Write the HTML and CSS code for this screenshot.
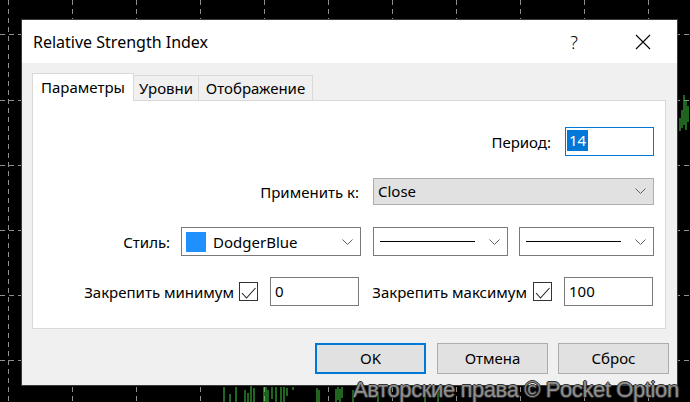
FILE: index.html
```html
<!DOCTYPE html>
<html lang="ru">
<head>
  <meta charset="UTF-8">
  <title>Relative Strength Index</title>
  <link rel="stylesheet" href="styles.css">
</head>
<body>
  <!-- chart behind the dialog -->
  <svg class="chart" width="690" height="402" viewBox="0 0 690 402">
    <g class="grid">
      <line x1="8.5" y1="0" x2="8.5" y2="402"/>
      <line x1="72.5" y1="0" x2="72.5" y2="402"/>
      <line x1="136.5" y1="0" x2="136.5" y2="402"/>
      <line x1="200.5" y1="0" x2="200.5" y2="402"/>
      <line x1="264.5" y1="0" x2="264.5" y2="402"/>
      <line x1="328.5" y1="0" x2="328.5" y2="402"/>
      <line x1="392.5" y1="0" x2="392.5" y2="402"/>
      <line x1="456.5" y1="0" x2="456.5" y2="402"/>
      <line x1="520.5" y1="0" x2="520.5" y2="402"/>
      <line x1="584.5" y1="0" x2="584.5" y2="402"/>
      <line x1="648.5" y1="0" x2="648.5" y2="402"/>
      <line x1="0" y1="34.5" x2="690" y2="34.5"/>
      <line x1="0" y1="100.5" x2="690" y2="100.5"/>
      <line x1="0" y1="165.5" x2="690" y2="165.5"/>
      <line x1="0" y1="230.5" x2="690" y2="230.5"/>
      <line x1="0" y1="295.5" x2="690" y2="295.5"/>
      <line x1="0" y1="360.5" x2="690" y2="360.5"/>
    </g>
    <g class="bars">
      <line x1="224" y1="387" x2="224" y2="402"/>
      <line x1="230" y1="394" x2="230" y2="402"/>
      <line x1="236" y1="387" x2="236" y2="402"/>
      <line x1="245" y1="390" x2="245" y2="402"/>
      <line x1="248" y1="393" x2="248" y2="402"/>
      <line x1="251" y1="386" x2="251" y2="402"/>
      <line x1="254" y1="388" x2="254" y2="402"/>
      <line x1="264" y1="387" x2="264" y2="402"/>
      <line x1="266" y1="387" x2="266" y2="402"/>
      <line x1="268" y1="390" x2="268" y2="402"/>
      <line x1="272" y1="387" x2="272" y2="399"/>
      <line x1="276" y1="387" x2="276" y2="402"/>
      <line x1="281" y1="387" x2="281" y2="402"/>
      <line x1="284" y1="387" x2="284" y2="402"/>
      <line x1="287" y1="388" x2="287" y2="396"/>
      <line x1="293" y1="387" x2="293" y2="390"/>
      <line x1="317" y1="388" x2="317" y2="402"/>
      <line x1="319" y1="390" x2="319" y2="402"/>
      <line x1="336" y1="389" x2="336" y2="402"/>
      <line x1="338" y1="387" x2="338" y2="400"/>
      <line x1="340" y1="389" x2="340" y2="402"/>
      <line x1="342" y1="387" x2="342" y2="398"/>
      <line x1="353" y1="390" x2="353" y2="402"/>
      <line x1="378" y1="392" x2="378" y2="402"/>
      <line x1="425" y1="391" x2="425" y2="402"/>
      <line x1="438" y1="389" x2="438" y2="402"/>
      <line x1="680" y1="118" x2="680" y2="131"/>
      <line x1="682" y1="110" x2="682" y2="128"/>
      <line x1="684" y1="95" x2="684" y2="125"/>
      <line x1="686" y1="100" x2="686" y2="130"/>
      <line x1="688" y1="106" x2="688" y2="122"/>
    </g>
  </svg>

  <div class="dialog">
    <div class="titlebar">
      <span class="title">Relative Strength Index</span>
      <span class="help">?</span>
      <svg class="close" width="16" height="16" viewBox="0 0 16 16"><path d="M1 1 L15 15 M15 1 L1 15"/></svg>
    </div>
    <div class="dialog-body">
      <div class="tabs">
        <div class="tab active">Параметры</div>
        <div class="tab tab-levels">Уровни</div>
        <div class="tab tab-view">Отображение</div>
      </div>
      <div class="panel">
        <div class="row">
          <span class="label">Период:</span>
          <div class="field focus"><span class="selected">14</span></div>
        </div>
        <div class="row">
          <span class="label">Применить к:</span>
          <div class="combo flat wide">
            <span class="combo-text">Close</span>
            <svg class="chev" width="11" height="6" viewBox="0 0 11 6"><polyline points="0.5,0.5 5.5,5.5 10.5,0.5"/></svg>
          </div>
        </div>
        <div class="row">
          <span class="label label-style">Стиль:</span>
          <div class="combo color">
            <span class="swatch"></span>
            <span class="combo-text">DodgerBlue</span>
            <svg class="chev" width="11" height="6" viewBox="0 0 11 6"><polyline points="0.5,0.5 5.5,5.5 10.5,0.5"/></svg>
          </div>
          <div class="combo line">
            <span class="line-sample"></span>
            <svg class="chev" width="11" height="6" viewBox="0 0 11 6"><polyline points="0.5,0.5 5.5,5.5 10.5,0.5"/></svg>
          </div>
          <div class="combo line">
            <span class="line-sample"></span>
            <svg class="chev" width="11" height="6" viewBox="0 0 11 6"><polyline points="0.5,0.5 5.5,5.5 10.5,0.5"/></svg>
          </div>
        </div>
        <div class="row row-fix">
          <span class="label">Закрепить минимум</span>
          <span class="check"><svg width="17" height="17" viewBox="0 0 17 17"><polyline points="2,10 6.5,15 15.5,5"/></svg></span>
          <div class="field"><span>0</span></div>
          <span class="label label-max">Закрепить максимум</span>
          <span class="check"><svg width="17" height="17" viewBox="0 0 17 17"><polyline points="2,10 6.5,15 15.5,5"/></svg></span>
          <div class="field"><span>100</span></div>
        </div>
      </div>
      <div class="buttons">
        <button class="btn default">OK</button>
        <button class="btn">Отмена</button>
        <button class="btn">Сброс</button>
      </div>
    </div>
  </div>

  <div class="watermark">Авторские права © Pocket Option</div>
</body>
</html>
```

FILE: styles.css
```css
body {
  margin: 0;
  width: 690px;
  height: 402px;
  overflow: hidden;
  position: relative;
  background: #000;
  font-family: 'Noto Sans', 'Open Sans', sans-serif;
  color: #000;
}
.chart {
  position: absolute;
  left: 0; top: 0;
}
.grid line {
  stroke: #8f8f8f;
  stroke-width: 1;
  stroke-dasharray: 5 4;
}
.bars line {
  stroke: #3ec83e;
  stroke-width: 1;
}
.dialog {
  position: relative;
  margin: 19px 0 0 21px;
  width: 657px;
  height: 367px;
  box-sizing: border-box;
  border: 1px solid #3a3a3a;
  background: #f0f0f0;
  display: flex;
  flex-direction: column;
}
.titlebar {
  height: 43px;
  background: #fff;
  display: flex;
  align-items: center;
  padding-left: 11px;
}
.title {
  font-size: 16px;
}
.help {
  margin-left: auto;
  font-size: 18px;
  font-weight: 300;
  margin-right: 57px;
}
.close {
  margin-right: 26px;
}
.close path {
  stroke: #000;
  stroke-width: 1.1;
  fill: none;
}
.dialog-body {
  padding: 10px 0 0 10px;
}
.tabs {
  display: flex;
  align-items: flex-end;
  height: 27px;
  font-size: 15px;
}
.tab {
  height: 25px;
  box-sizing: border-box;
  border: 1px solid #d9d9d9;
  border-left: none;
  border-bottom: none;
  background: #f0f0f0;
  display: flex;
  align-items: center;
  justify-content: center;
}
.tab.active {
  width: 102px;
  height: 28px;
  margin-bottom: -1px;
  border-left: 1px solid #d9d9d9;
  background: #fff;
  padding-bottom: 2px;
  position: relative;
  z-index: 1;
}
.tab-levels {
  width: 65px;
}
.tab-view {
  width: 114px;
}
.panel {
  width: 634px;
  height: 229px;
  box-sizing: border-box;
  border: 1px solid #d9d9d9;
  background: #fff;
  padding: 26px 11px 0 0;
  display: flex;
  flex-direction: column;
  gap: 21px;
  font-size: 15px;
}
.row {
  height: 29px;
  display: flex;
  align-items: center;
  justify-content: flex-end;
  white-space: nowrap;
}
.label {
  margin-right: 14px;
}
.label-style {
  margin-right: 11px;
}
.field {
  width: 89px;
  height: 29px;
  box-sizing: border-box;
  border: 1px solid #7a7a7a;
  background: #fff;
  display: flex;
  align-items: center;
  padding: 0 0 2px 4px;
}
.field.focus {
  border-color: #0078d7;
  padding-left: 1px;
}
.selected {
  background: #0078d7;
  color: #fff;
  line-height: 21px;
  padding: 0 2px;
}
.combo {
  height: 29px;
  box-sizing: border-box;
  border: 1px solid #7a7a7a;
  background: #fff;
  display: flex;
  align-items: center;
  padding-left: 4px;
}
.combo .chev {
  margin-left: auto;
  margin-right: 7px;
}
.chev polyline {
  fill: none;
  stroke: #5f5f5f;
  stroke-width: 1;
}
.combo.flat {
  height: 27px;
  background: #e1e1e1;
  border-color: #adadad;
  padding-bottom: 2px;
}
.combo.wide {
  width: 281px;
}
.combo.color {
  width: 180px;
  margin-right: 12px;
}
.combo.line {
  width: 135px;
  padding-left: 6px;
}
.combo.line + .combo.line {
  margin-left: 11px;
}
.swatch {
  width: 20px;
  height: 20px;
  background: #1e90ff;
  margin-right: 7px;
}
.line-sample {
  width: 95px;
  height: 1px;
  background: #000;
}
.check {
  width: 19px;
  height: 19px;
  box-sizing: border-box;
  border: 1px solid #333;
  background: #fff;
  display: flex;
}
.check polyline {
  fill: none;
  stroke: #222;
  stroke-width: 1.1;
}
.row-fix {
  padding-right: 1px;
}
.row-fix .label {
  margin-right: 5px;
}
.row-fix .check {
  margin-right: 12px;
}
.row-fix .field + .label {
  margin-left: 11px;
}
.label-max {
  width: 157px;
  text-align: right;
  margin-right: 6px !important;
}
.buttons {
  display: flex;
  justify-content: flex-end;
  padding-right: 8px;
  margin-top: 14px;
}
.btn {
  width: 111px;
  height: 31px;
  box-sizing: border-box;
  border: 1px solid #adadad;
  background: #e1e1e1;
  font-family: inherit;
  font-size: 15px;
  color: #000;
  padding: 0 0 2px 0;
  margin-left: 10px;
}
.btn.default {
  border: 2px solid #0078d7;
  margin-right: 1px;
}
.watermark {
  position: absolute;
  left: 353px;
  top: 379px;
  font-family: 'Liberation Sans', Arial, sans-serif;
  font-size: 22px;
  line-height: 22px;
  letter-spacing: -0.4px;
  color: rgba(150, 150, 150, 0.95);
  white-space: nowrap;
  text-shadow: -1px 0 #333, 1px 0 #333, 0 -1px #333, 0 1px #333;
}
```
